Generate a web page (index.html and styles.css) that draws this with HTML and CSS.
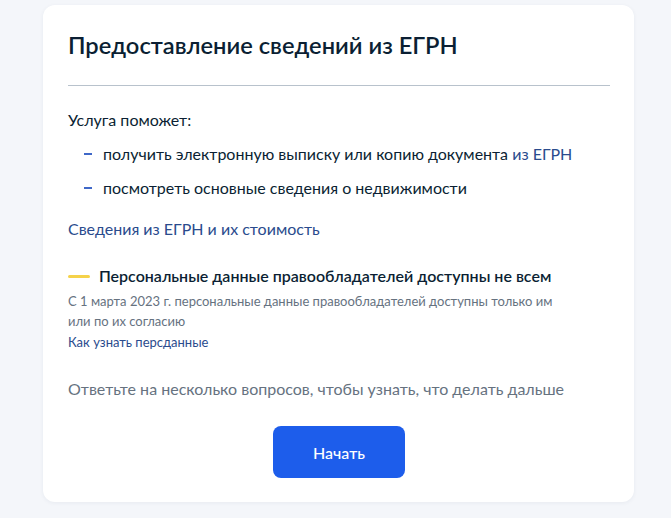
FILE: index.html
```html
<!DOCTYPE html>
<html lang="ru">
<head>
<meta charset="utf-8">
<link rel="stylesheet" href="styles.css">
</head>
<body>
<div class="page">
  <div class="card">
    <h1 class="title">Предоставление сведений из ЕГРН</h1>
    <div class="divider"></div>
    <p class="lead">Услуга поможет:</p>
    <ul class="list">
      <li>получить электронную выписку или копию документа <a class="link" href="#">из ЕГРН</a></li>
      <li>посмотреть основные сведения о недвижимости</li>
    </ul>
    <a class="link block-link" href="#">Сведения из ЕГРН и их стоимость</a>
    <div class="notice">
      <div class="notice-head"><span class="bar"></span>Персональные данные правообладателей доступны не всем</div>
      <p class="notice-text">С 1 марта 2023 г. персональные данные правообладателей доступны только им или по их согласию</p>
      <a class="link small-link" href="#">Как узнать персданные</a>
    </div>
    <p class="hint">Ответьте на несколько вопросов, чтобы узнать, что делать дальше</p>
    <div class="actions"><button class="btn">Начать</button></div>
  </div>
</div>
</body>
</html>
```
FILE: styles.css
```css
html, body { margin: 0; padding: 0; }
body {
  background: #f4f6fa;
  font-family: Lato, "Noto Sans", sans-serif;
  color: #0b1f33;
  width: 671px;
  height: 518px;
  overflow: hidden;
}
.page { padding: 5px 37px 0 43px; }
.card {
  background: #fff;
  border-radius: 12px;
  box-shadow: 0 1px 4px rgba(30,50,90,0.06);
  padding: 24px 24px 24px 25px;
  width: 542px;
}
.title {
  margin: 0;
  font-size: 23.7px;
  font-weight: 600;
  line-height: 32px;
  color: #0b1f33;
}
.divider { height: 1px; background: #b8c2cc; margin: 24px 0 22px; }
.lead { margin: 0; font-size: 16px; line-height: 24px; }
.list { list-style: none; margin: 10px 0 0; padding: 0 0 0 16px; }
.list li { position: relative; padding-left: 19px; font-size: 16px; line-height: 24px; margin-bottom: 10px; }
.list li::before {
  content: ""; position: absolute; left: 0; top: 11px; width: 8px; height: 2px; background: #3f68c8;
}
.link { color: #2a4b8d; text-decoration: none; }
.block-link { display: block; font-size: 16px; line-height: 24px; margin-top: 17px; }
.notice { margin-top: 23px; }
.notice-head { display: flex; align-items: center; font-size: 16px; font-weight: 600; line-height: 24px; }
.bar { width: 22px; height: 3px; background: #f5d24a; border-radius: 2px; margin-right: 9px; }
.notice-text { margin: 3px 0 0; font-size: 13px; line-height: 20px; color: #66727f; width: 500px; }
.small-link { display: block; font-size: 13px; line-height: 20px; margin-top: 1px; }
.hint { margin: 25px 0 0; font-size: 16px; line-height: 24px; color: #66727f; }
.actions { display: flex; justify-content: center; margin-top: 25px; }
.btn {
  width: 132px; height: 52px; border: 0; border-radius: 8px;
  background: #1d5deb; color: #fff; font-family: Lato, sans-serif; font-size: 16px; font-weight: 500;
}
```
